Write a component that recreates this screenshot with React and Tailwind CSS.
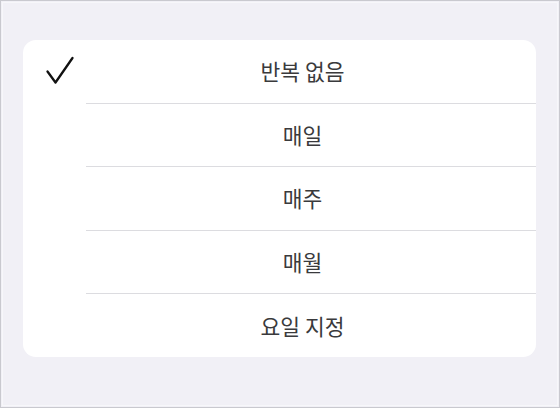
const OPTIONS = ["반복 없음", "매일", "매주", "매월", "요일 지정"];

function Check() {
  return (
    <svg width="30" height="30" viewBox="0 0 30 30" fill="none">
      <path
        d="M2.5 15.5 L10.5 26.5 L27.5 2"
        stroke="#111"
        strokeWidth="2.3"
        strokeLinecap="round"
        strokeLinejoin="round"
      />
    </svg>
  );
}

export default function App() {
  const selected = 0;

  return (
    <div
      className="h-[408px] w-[560px] border border-[#c9c9cf] bg-[#f1f0f6] p-px"
      style={{ fontFamily: '"Noto Sans CJK KR", "Noto Sans", sans-serif' }}
    >
      <div className="h-full w-full border border-[#f7f7fa] pt-[37px] pl-[20px] pr-[21px]">
        <div className="overflow-hidden rounded-[13px] bg-white">
          {OPTIONS.map((label, i) => (
            <div key={label}>
              <div className="relative flex h-[62.6px] items-center justify-center pl-[46px] text-[21.5px] text-[#3a3a3c]">
                {i === selected && (
                  <span className="absolute left-[22px] top-[16px]">
                    <Check />
                  </span>
                )}
                {label}
              </div>
              {i < OPTIONS.length - 1 && (
                <div className="ml-[63px] h-px bg-[#dcdce0]" />
              )}
            </div>
          ))}
        </div>
      </div>
    </div>
  );
}
